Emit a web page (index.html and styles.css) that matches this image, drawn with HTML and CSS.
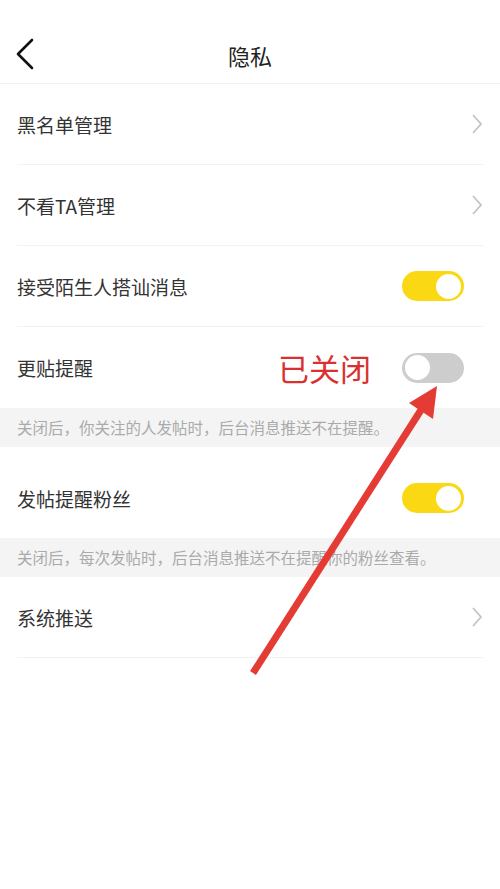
FILE: index.html
```html
<!DOCTYPE html>
<html lang="zh-CN">
<head>
<meta charset="UTF-8">
<title>隐私</title>
<link rel="stylesheet" href="styles.css">
</head>
<body>
<div class="page">
  <div class="header">
    <svg class="back" width="20" height="32" viewBox="0 0 20 32">
      <polyline points="17,2 3,16 17,30" fill="none" stroke="#111" stroke-width="2.6" stroke-linecap="round" stroke-linejoin="round"/>
    </svg>
    <div class="title">隐私</div>
  </div>

  <div class="row">
    <span class="label">黑名单管理</span>
    <svg class="more" width="12" height="22" viewBox="0 0 12 22"><polyline points="2,2 10,11 2,20" fill="none" stroke="#c4c4c4" stroke-width="1.8"/></svg>
  </div>
  <div class="row">
    <span class="label">不看TA管理</span>
    <svg class="more" width="12" height="22" viewBox="0 0 12 22"><polyline points="2,2 10,11 2,20" fill="none" stroke="#c4c4c4" stroke-width="1.8"/></svg>
  </div>
  <div class="row">
    <span class="label">接受陌生人搭讪消息</span>
    <span class="switch on"><span class="knob"></span></span>
  </div>
  <div class="row no-line">
    <span class="label">更贴提醒</span>
    <span class="note">已关闭</span>
    <span class="switch off"><span class="knob"></span></span>
  </div>
  <div class="tip">关闭后，你关注的人发帖时，后台消息推送不在提醒。</div>
  <div class="row no-line tall">
    <span class="label">发帖提醒粉丝</span>
    <span class="switch on"><span class="knob"></span></span>
  </div>
  <div class="tip">关闭后，每次发帖时，后台消息推送不在提醒你的粉丝查看。</div>
  <div class="row">
    <span class="label">系统推送</span>
    <svg class="more" width="12" height="22" viewBox="0 0 12 22"><polyline points="2,2 10,11 2,20" fill="none" stroke="#c4c4c4" stroke-width="1.8"/></svg>
  </div>

  <svg class="arrow" width="500" height="889" viewBox="0 0 500 889">
    <line x1="253" y1="673" x2="421" y2="410" stroke="#e53b35" stroke-width="7"/>
    <polygon points="437,386 409,403 433,419" fill="#e53b35"/>
  </svg>
</div>
</body>
</html>
```

FILE: styles.css
```css
body {
  margin: 0;
  padding: 0;
  background-color: #fff;
  font-family: "Noto Sans CJK SC", "Noto Sans", sans-serif;
  color: #333;
}
.page {
  position: relative;
  width: 500px;
  height: 889px;
  overflow: hidden;
  background-color: #fff;
}
.header {
  height: 84px;
  display: flex;
  align-items: center;
  justify-content: center;
  position: relative;
  border-bottom: 1px solid #f2f2f2;
  box-sizing: border-box;
}
.back {
  position: absolute;
  left: 15px;
  top: 38px;
}
.title {
  font-size: 22px;
  color: #222;
  margin-top: 26px;
}
.row {
  height: 81px;
  margin: 0 17px;
  display: flex;
  align-items: center;
  border-bottom: 1px solid #f2f2f2;
  box-sizing: border-box;
}
.row.no-line {
  border-bottom: none;
}
.row.tall {
  height: 91px;
  padding-top: 11px;
}
.label {
  flex: 1;
  font-size: 19px;
  color: #333;
}
.note {
  font-size: 31px;
  color: #d93131;
  margin-right: 31px;
}
.switch {
  width: 62px;
  height: 30px;
  border-radius: 15px;
  display: flex;
  align-items: center;
  box-sizing: border-box;
  padding: 0 3px;
  margin-right: 19px;
}
.switch.on {
  background-color: #fad914;
  justify-content: flex-end;
}
.switch.off {
  background-color: #cdcdcd;
  justify-content: flex-start;
}
.knob {
  width: 25px;
  height: 25px;
  border-radius: 50%;
  background-color: #fff;
}
.tip {
  height: 39px;
  background-color: #f4f4f4;
  color: #aaa;
  font-size: 15.5px;
  line-height: 39px;
  padding-left: 17px;
  white-space: nowrap;
}
.arrow {
  position: absolute;
  left: 0;
  top: 0;
  pointer-events: none;
}
```
